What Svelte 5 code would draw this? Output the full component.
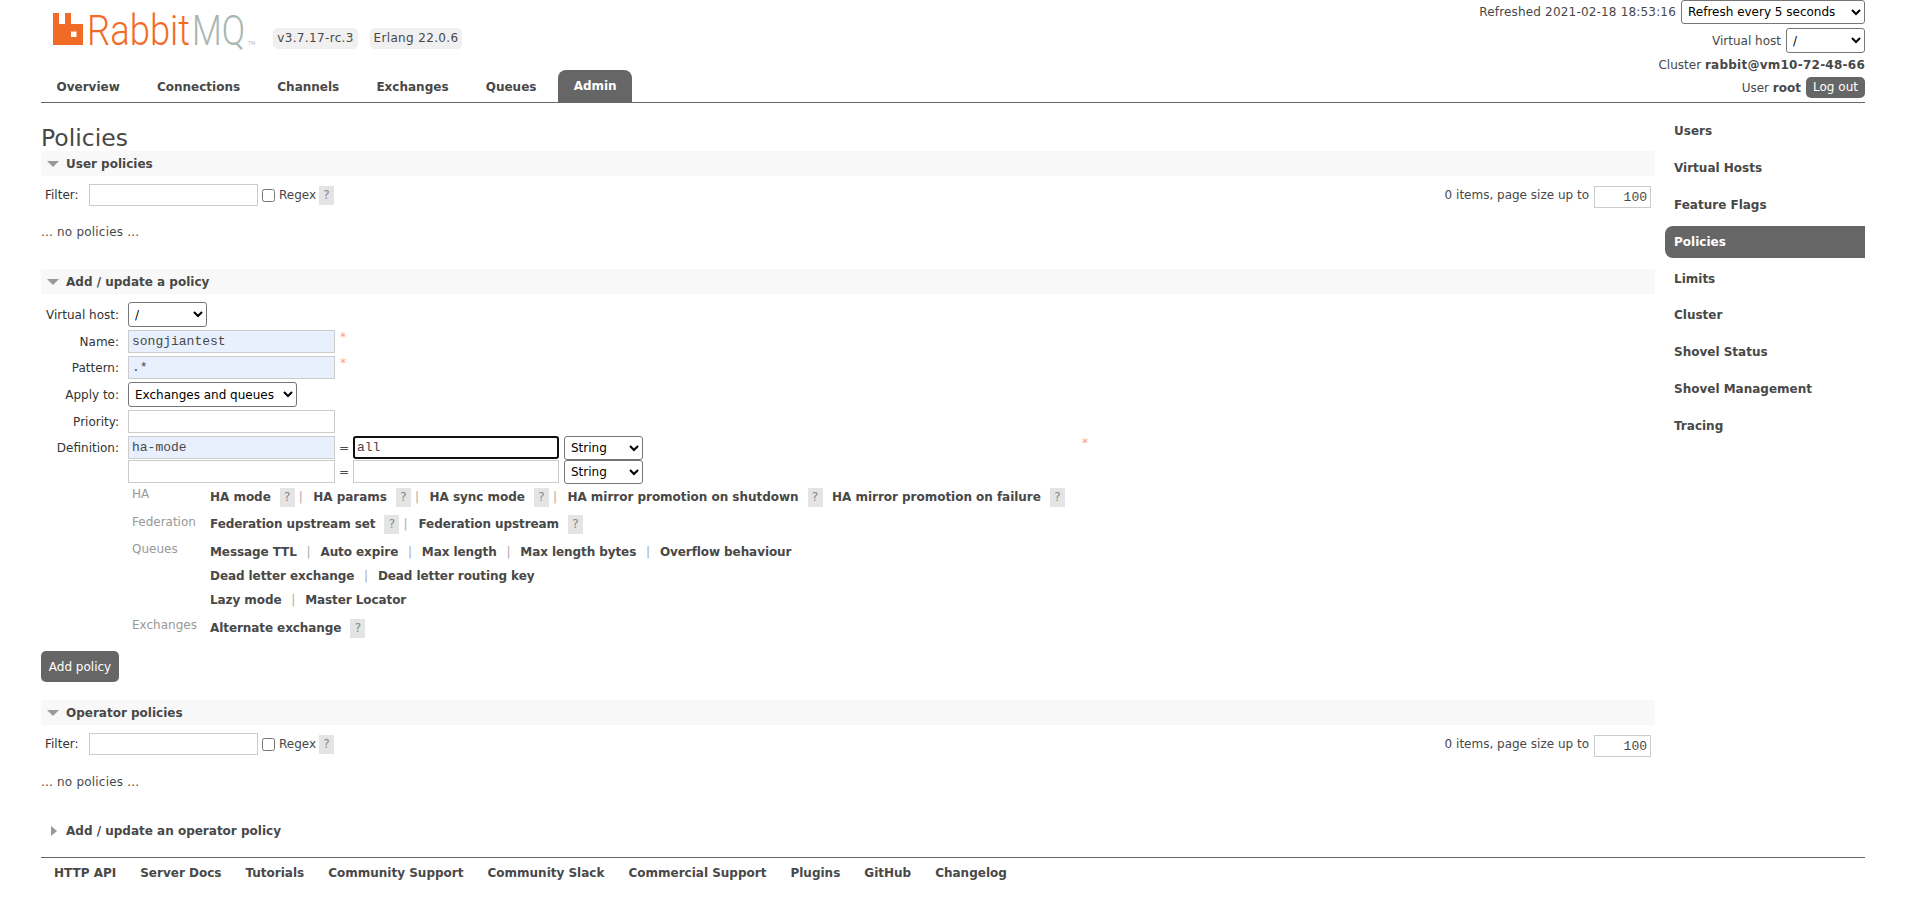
<script>
  const tabs = ['Overview', 'Connections', 'Channels', 'Exchanges', 'Queues', 'Admin'];
  const side = ['Users', 'Virtual Hosts', 'Feature Flags', 'Policies', 'Limits', 'Cluster', 'Shovel Status', 'Shovel Management', 'Tracing'];
  const foot = ['HTTP API', 'Server Docs', 'Tutorials', 'Community Support', 'Community Slack', 'Commercial Support', 'Plugins', 'GitHub', 'Changelog'];
</script>

{#snippet filter()}
  <div class="filter">
    <span class="flabel">Filter:</span>
    <input class="txt finput" />
    <input type="checkbox" class="check" />
    <span class="regex">Regex</span>
    <span class="q rq">?</span>
    <span class="spacer"></span>
    <span class="items">0 items, page size up to</span>
    <input class="txt size" value="100" />
  </div>
{/snippet}

<div class="page">
  <header class="head">
    <div class="brand">
      <div class="logorow">
        <svg class="logo" width="204" height="56" viewBox="0 0 204 56" aria-label="RabbitMQ">
          <path fill="#f26b26" fill-rule="evenodd" d="M0 10h6v11h6V10h6v11h12v21H0zM18 28.500v5.500h5.500v-5.500z" />
          <text class="wm o" transform="translate(34 42) scale(1 1.2)" textLength="103" lengthAdjust="spacingAndGlyphs">Rabbit</text>
          <text class="wm g" transform="translate(139 42) scale(1 1.2)" textLength="53" lengthAdjust="spacingAndGlyphs">MQ</text>
          <text class="tm" x="195" y="42">TM</text>
        </svg>
        <span class="badge v1">v3.7.17-rc.3</span>
        <span class="badge v2">Erlang 22.0.6</span>
      </div>
      <nav class="tabs">
        {#each tabs as t}
          <span class="tab" class:on={t === 'Admin'}>{t}</span>
        {/each}
      </nav>
    </div>
    <div class="status">
      <div class="srow r1"><span class="sp">Refreshed 2021-02-18 18:53:16</span><select class="sel refresh"><option>Refresh every 5 seconds</option></select></div>
      <div class="srow r2"><span>Virtual host</span><select class="sel vh"><option>/</option></select></div>
      <div class="srow r3"><span>Cluster <b>rabbit@vm10-72-48-66</b></span></div>
      <div class="srow r4"><span>User <b>root</b></span><span class="logout">Log out</span></div>
    </div>
  </header>

  <div class="body">
    <main class="main">
      <h1>Policies</h1>

      <h2 class="sec"><span class="tri"></span>User policies</h2>
      {@render filter()}
      <p class="none">... no policies ...</p>

      <h2 class="sec sec2"><span class="tri"></span>Add / update a policy</h2>
      <div class="form">
        <div class="row rvh"><span class="lab">Virtual host:</span><select class="sel fvh"><option>/</option></select></div>
        <div class="row rt"><span class="lab">Name:</span><input class="txt wide auto" value="songjiantest" /><span class="star">*</span></div>
        <div class="row rt"><span class="lab">Pattern:</span><input class="txt wide auto" value=".*" /><span class="star">*</span></div>
        <div class="row rapply"><span class="lab">Apply to:</span><select class="sel fapply"><option>Exchanges and queues</option></select></div>
        <div class="row rt"><span class="lab">Priority:</span><input class="txt wide" /></div>
        <div class="row rdef">
          <span class="lab">Definition:</span>
          <input class="txt wide auto" value="ha-mode" /><span class="eq">=</span><input class="txt val focus" value="all" /><select class="sel ftype"><option>String</option></select>
          <span class="star defstar">*</span>
        </div>
        <div class="row rdef2">
          <span class="lab"></span>
          <input class="txt wide" /><span class="eq">=</span><input class="txt val" /><select class="sel ftype"><option>String</option></select>
        </div>

        <div class="help h1row">
          <span class="ht">HA</span>
          <div class="hl">
            <div class="hline"><b>HA mode</b><span class="q">?</span><i>|</i><b>HA params</b><span class="q">?</span><i>|</i><b>HA sync mode</b><span class="q">?</span><i>|</i><b>HA mirror promotion on shutdown</b><span class="q">?</span><b class="nb">HA mirror promotion on failure</b><span class="q">?</span></div>
          </div>
        </div>
        <div class="help">
          <span class="ht">Federation</span>
          <div class="hl">
            <div class="hline"><b>Federation upstream set</b><span class="q">?</span><i>|</i><b>Federation upstream</b><span class="q">?</span></div>
          </div>
        </div>
        <div class="help hq">
          <span class="ht">Queues</span>
          <div class="hl">
            <div class="hline pl"><b>Message TTL</b><i>|</i><b>Auto expire</b><i>|</i><b>Max length</b><i>|</i><b>Max length bytes</b><i>|</i><b>Overflow behaviour</b></div>
            <div class="hline pl"><b>Dead letter exchange</b><i>|</i><b>Dead letter routing key</b></div>
            <div class="hline pl"><b>Lazy mode</b><i>|</i><b>Master Locator</b></div>
          </div>
        </div>
        <div class="help hx">
          <span class="ht">Exchanges</span>
          <div class="hl">
            <div class="hline"><b>Alternate exchange</b><span class="q">?</span></div>
          </div>
        </div>
      </div>
      <button class="add">Add policy</button>

      <h2 class="sec sec3"><span class="tri"></span>Operator policies</h2>
      {@render filter()}
      <p class="none n2">... no policies ...</p>

      <h2 class="sec sec4"><span class="tri right"></span>Add / update an operator policy</h2>
    </main>

    <aside class="side">
      {#each side as s}
        <div class="sitem" class:on={s === 'Policies'}>{s}</div>
      {/each}
    </aside>
  </div>

  <footer class="foot">
    {#each foot as f}<span>{f}</span>{/each}
  </footer>
</div>

<style>
  :global(body) { margin: 0; background: #fff; }
  .page {
    width: 1824px;
    margin-left: 41px;
    font: 12px/16px "DejaVu Sans", Verdana, sans-serif;
    color: #484848;
  }
  .head {
    display: flex;
    justify-content: space-between;
    height: 102px;
    border-bottom: 1px solid #666;
  }
  .logorow { display: flex; align-items: flex-start; height: 70px; padding-left: 12px; }
  .logo { margin-top: 3px; flex: none; }
  .wm { font: 300 36px Roboto, "Open Sans", sans-serif; }
  .o { fill: #f26b26; }
  .g { fill: #a9b6b1; }
  .tm { font: 5px "DejaVu Sans", sans-serif; fill: #bbb; }
  .badge {
    background: #f0f0f0;
    border-radius: 5px;
    height: 21px;
    line-height: 21px;
    margin-top: 28px;
    text-align: center;
    color: #484848;
    letter-spacing: .35px;
  }
  .v1 { width: 85px; margin-left: 16px; }
  .v2 { width: 92px; margin-left: 12px; }
  .tabs { display: flex; }
  .tab {
    height: 32px;
    line-height: 34px;
    padding: 0 15.500px;
    margin-right: 6.200px;
    font-weight: bold;
    color: #484848;
    border-radius: 8px 8px 0 0;
  }
  .tab.on { background: #666; color: #fff; margin-right: 0; line-height: 33px; }

  .status { text-align: right; }
  .srow { display: flex; justify-content: flex-end; align-items: center; gap: 5px; }
  .sp { letter-spacing: .18px; }
  .r1 { height: 24px; margin-bottom: 4px; }
  .r2 { height: 25px; }
  .r3 { height: 22px; margin-top: 1px; }
  .r3 b { letter-spacing: .25px; }
  .r4 { height: 21px; margin-top: 1px; }
  .srow b { color: #484848; }
  .sel {
    font: 12px "DejaVu Sans", Verdana, sans-serif;
    color: #000;
    background: #fff;
    border: 1px solid #767676;
    border-radius: 3px;
    padding: 0 0 0 2px;
    margin: 0;
    box-sizing: border-box;
  }
  .refresh { width: 184px; height: 24px; }
  .vh { width: 79px; height: 25px; }
  .logout {
    width: 59px;
    height: 21px;
    line-height: 21px;
    text-align: center;
    background: #666;
    color: #fff;
    border-radius: 5px;
  }

  .body { display: flex; gap: 10px; }
  .main { width: 1614px; flex: none; }
  h1 {
    font-size: 23.500px;
    font-weight: normal;
    line-height: 28px;
    margin: 21px 0 0;
    color: #484848;
    height: 27px;
  }
  .sec {
    display: flex;
    align-items: center;
    height: 25px;
    margin: 0;
    font-size: 12px;
    font-weight: bold;
    background: #f8f8f8;
    color: #484848;
  }
  .tri {
    width: 0;
    height: 0;
    border-left: 6px solid transparent;
    border-right: 6px solid transparent;
    border-top: 6px solid #999;
    margin: 0 7px 0 6px;
  }
  .tri.right {
    border-top: 5px solid transparent;
    border-bottom: 5px solid transparent;
    border-left: 6px solid #999;
    border-right: 0;
    margin: 0 9px 0 10px;
  }
  .sec2 { margin-top: 26px; }
  .sec3 { margin-top: 18px; }
  .sec4 { margin-top: 25px; background: none; }

  .filter { display: flex; align-items: center; height: 22px; margin-top: 8px; padding-right: 4px; }
  .flabel { width: 48px; padding-left: 4px; box-sizing: border-box; color: #333; }
  .txt {
    box-sizing: border-box;
    border: 1px solid #ccc;
    margin: 0;
    padding: 0 3px;
    height: 23px;
    font: 13px "Liberation Mono", monospace;
    color: #484848;
    background: #fff;
    outline: none;
  }
  .finput { width: 169px; height: 22px; }
  .check { width: 13px; height: 13px; margin: 0 4px 0 4px; }
  .regex { width: 40px; }
  .q {
    display: inline-block;
    width: 15px;
    height: 19px;
    line-height: 19px;
    text-align: center;
    background: #e4e4e4;
    color: #888;
    font-weight: normal;
    margin-left: 9px;
  }
  .q.rq { margin-left: 0; }
  .spacer { flex: 1; }
  .items { margin-right: 5px; }
  .size { width: 57px; height: 22px; text-align: right; margin-top: 4px; }
  .none { margin: 16px 0 0; height: 21px; line-height: 21px; letter-spacing: .2px; }
  .n2 { margin-top: 17px; }

  .form { margin-top: 8px; }
  .row { display: flex; align-items: center; margin-bottom: 3px; }
  .lab { width: 78px; text-align: right; margin-right: 9px; color: #333; flex: none; }
  .rvh { height: 25px; }
  .fvh { width: 79px; height: 25px; }
  .rt { height: 23px; }
  .wide { width: 207px; }
  .auto { background: #e8f0fe; }
  .star { color: #f99; margin-left: 5px; align-self: flex-start; line-height: 14px; }
  .rapply { height: 25px; }
  .fapply { width: 169px; height: 25px; }
  .rdef { height: 23px; margin-bottom: 1px; }
  .rdef2 { height: 23px; margin-bottom: 0; }
  .eq { width: 18px; text-align: center; flex: none; }
  .val { width: 206px; margin-right: 5px; }
  .focus { outline: 2px solid #101010; outline-offset: -2px; border-radius: 3px; }
  .ftype { width: 79px; height: 24px; flex: none; }
  .defstar { margin-left: 439px; }

  .help { display: flex; padding-left: 91px; margin-top: 4px; }
  .h1row { margin-top: 4px; }
  .hq { margin-top: 3px; }
  .hx { margin-top: 6px; }
  .ht { width: 78px; color: #999; flex: none; line-height: 16px; }
  .h1row .ht, .hx .ht { margin-top: -1px; }
  .hq .ht { margin-top: 1px; }
  .hl { display: flex; flex-direction: column; }
  .hline { display: flex; align-items: center; height: 20px; margin-bottom: 3px; white-space: nowrap; }
  .hline.pl { height: 24px; margin-bottom: 0; }
  .hline b { color: #484848; letter-spacing: -.08px; }
  .h1row .hline b { letter-spacing: -.03px; }
  .hline i { font-style: normal; color: #aaa; margin: 0 11px 0 4px; }
  .h1row .hline i { margin-right: 10.500px; }
  .hline.pl i { margin: 0 9.800px; }
  .nb { margin-left: 9.500px; }
  .add {
    display: block;
    margin: 10px 0 0;
    width: 78px;
    height: 31px;
    background: #666;
    color: #fff;
    border: 0;
    border-radius: 5px;
    font: 12px "DejaVu Sans", Verdana, sans-serif;
    padding: 0;
  }

  .side { width: 200px; margin-top: 12px; display: flex; flex-direction: column; gap: 4.875px; }
  .sitem {
    height: 32px;
    line-height: 32px;
    padding-left: 9px;
    font-weight: bold;
    color: #484848;
    border-radius: 8px 0 0 8px;
  }
  .sitem.on { background: #666; color: #fff; }

  .foot {
    display: flex;
    gap: 24px;
    border-top: 1px solid #666;
    margin-top: 14px;
    padding: 7px 0 0 13px;
    font-weight: bold;
    color: #484848;
  }
</style>
